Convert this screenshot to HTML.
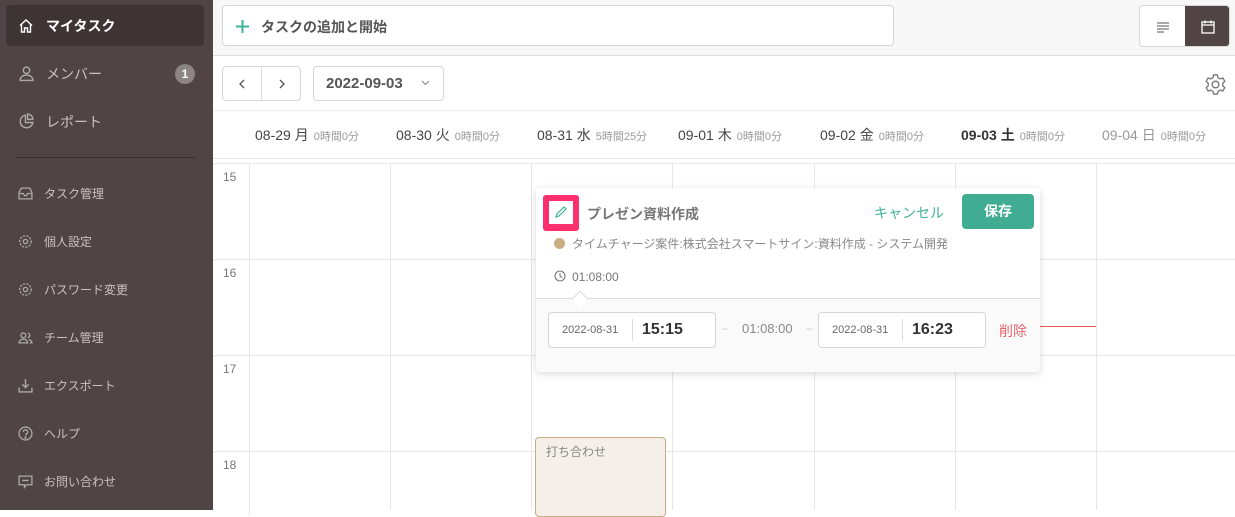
<!DOCTYPE html>
<html><head><meta charset="utf-8"><style>
*{box-sizing:border-box;margin:0;padding:0}
body{width:1235px;height:510px;overflow:hidden;position:relative;background:#fff;font-family:"Liberation Sans","Noto Sans CJK JP",sans-serif;color:#333}
.abs{position:absolute}
#side{left:0;top:0;width:213px;height:510px;background:#514446}
.nav{position:absolute;left:6px;width:198px;height:41px;display:flex;align-items:center;color:#c9c1c1;font-size:14px}
.nav svg{position:absolute;left:12px}
.nav span{position:absolute;left:40px}
.sm{font-size:12px}
.sm span{left:38px}
#top{left:213px;top:0;width:1022px;height:56px;background:#f7f7f7;border-bottom:1px solid #ddd}
.btn{position:absolute;border:1px solid #d6d6d6;border-radius:4px;background:#fff}
.col{position:absolute;top:158px;width:1px;height:352px;background:#e6e6e6}
.row{position:absolute;left:213px;width:1022px;height:1px;background:#e6e6e6}
.hr{position:absolute;left:223px;font-size:12px;color:#777}
.day{position:absolute;top:125px;font-size:14px;color:#444;white-space:nowrap}
.day small{font-size:11px;color:#999;margin-left:5px}
</style></head><body>
<div id="side" class="abs">
 <div class="nav" style="top:5px;background:#3e3434;border-radius:4px;color:#fff;font-weight:bold"><svg width="16" height="16" viewBox="0 0 16 16" fill="none" stroke="#fff" stroke-width="1.4"><path d="M2 7.5L8 2l6 5.5M3.5 6.5V14h3v-4h3v4h3V6.5"/></svg><span>マイタスク</span></div>
 <div class="nav" style="top:53px"><svg width="17" height="17" viewBox="0 0 16 16" fill="none" stroke="#aaa" stroke-width="1.3"><circle cx="8" cy="5" r="3"/><path d="M2 14.5c0-3 2.5-5 6-5s6 2 6 5z"/></svg><span>メンバー</span><div class="abs" style="left:169px;top:11px;width:20px;height:20px;border-radius:10px;background:#8d8585;color:#fff;font-size:12px;font-weight:bold;text-align:center;line-height:20px">1</div></div>
 <div class="nav" style="top:101px"><svg width="17" height="17" viewBox="0 0 16 16" fill="none" stroke="#aaa" stroke-width="1.3"><path d="M7 2a6 6 0 1 0 7 7H7z M9 1v5h5a5 5 0 0 0-5-5z"/></svg><span>レポート</span></div>
 <div class="abs" style="left:15px;top:157px;width:180px;height:1px;background:#3a3031"></div>
 <div class="nav sm" style="top:173px"><svg width="15" height="15" viewBox="0 0 14 14" fill="none" stroke="#aaa" stroke-width="1.2"><path d="M1 6l2-4h8l2 4v6H1zM1 7h4l1 2h2l1-2h4"/></svg><span>タスク管理</span></div>
 <div class="nav sm" style="top:221px"><svg width="15" height="15" viewBox="0 0 14 14" fill="none" stroke="#aaa" stroke-width="1.2"><circle cx="7" cy="7" r="2"/><circle cx="7" cy="7" r="5.3" stroke-dasharray="2 1.2"/></svg><span>個人設定</span></div>
 <div class="nav sm" style="top:269px"><svg width="15" height="15" viewBox="0 0 14 14" fill="none" stroke="#aaa" stroke-width="1.2"><circle cx="7" cy="7" r="2"/><circle cx="7" cy="7" r="5.3" stroke-dasharray="2 1.2"/></svg><span>パスワード変更</span></div>
 <div class="nav sm" style="top:317px"><svg width="15" height="15" viewBox="0 0 14 14" fill="none" stroke="#aaa" stroke-width="1.2"><circle cx="5" cy="5" r="2.3"/><path d="M1 12c0-2 2-3.5 4-3.5s4 1.5 4 3.5zM9 3a2 2 0 0 1 0 4M10 9c2 .5 3 1.5 3 3h-2"/></svg><span>チーム管理</span></div>
 <div class="nav sm" style="top:365px"><svg width="15" height="15" viewBox="0 0 14 14" fill="none" stroke="#aaa" stroke-width="1.3"><path d="M7 1v8M4 6l3 3 3-3M1 9v4h12V9"/></svg><span>エクスポート</span></div>
 <div class="nav sm" style="top:413px"><svg width="15" height="15" viewBox="0 0 14 14" fill="none" stroke="#aaa" stroke-width="1.2"><circle cx="7" cy="7" r="6"/><path d="M5 5.5a2 2 0 1 1 2.5 2V9"/><circle cx="7" cy="10.8" r=".5" fill="#aaa"/></svg><span>ヘルプ</span></div>
 <div class="nav sm" style="top:461px"><svg width="15" height="15" viewBox="0 0 14 14" fill="none" stroke="#aaa" stroke-width="1.2"><path d="M1 2h12v8H8l-2 2.5V10H1zM4 6h6"/></svg><span>お問い合わせ</span></div>
</div>
<div id="top" class="abs"></div>
<div class="btn" style="left:222px;top:5px;width:672px;height:41px"><svg class="abs" style="left:13px;top:14px" width="13" height="13" viewBox="0 0 13 13" stroke="#3fb39a" stroke-width="2"><path d="M6.5 0v13M0 6.5h13"/></svg><span class="abs" style="left:38px;top:11px;font-size:14px;font-weight:bold;color:#555">タスクの追加と開始</span></div>
<div class="btn" style="left:1139px;top:5px;width:91px;height:42px;overflow:hidden"><div class="abs" style="left:45px;top:0;width:46px;height:42px;background:#514446"></div>
<svg class="abs" style="left:16px;top:14px" width="14" height="14" viewBox="0 0 14 14" stroke="#777" stroke-width="1.2"><path d="M1 3h12M1 6h12M1 9h12M1 12h7"/></svg>
<svg class="abs" style="left:60px;top:13px" width="16" height="16" viewBox="0 0 16 16" fill="none" stroke="#fff" stroke-width="1.3"><rect x="2" y="3" width="12" height="11"/><path d="M2 6h12M5 1.5v3M11 1.5v3"/></svg></div>
<div class="btn" style="left:222px;top:66px;width:79px;height:35px"><div class="abs" style="left:38px;top:0;width:1px;height:33px;background:#ddd"></div>
<svg class="abs" style="left:15px;top:12px" width="8" height="10" viewBox="0 0 8 10" fill="none" stroke="#555" stroke-width="1.3"><path d="M6 1L2 5l4 4"/></svg>
<svg class="abs" style="left:55px;top:12px" width="8" height="10" viewBox="0 0 8 10" fill="none" stroke="#555" stroke-width="1.3"><path d="M2 1l4 4-4 4"/></svg></div>
<div class="btn" style="left:313px;top:66px;width:131px;height:35px"><span class="abs" style="left:12px;top:8px;font-size:15px;font-weight:bold;color:#555">2022-09-03</span><svg class="abs" style="left:107px;top:13px" width="9" height="6" viewBox="0 0 9 6" fill="none" stroke="#888" stroke-width="1.1"><path d="M1 1l3.5 3.5L8 1"/></svg></div>
<svg class="abs" style="left:1204px;top:73px" width="23" height="23" viewBox="0 0 24 24" fill="none" stroke="#777" stroke-width="1.4"><circle cx="12" cy="12" r="3.5"/><path d="M10 2h4l.6 2.8 2.4 1.4 2.7-.9 2 3.4-2.1 1.9v2.8l2.1 1.9-2 3.4-2.7-.9-2.4 1.4L14 22h-4l-.6-2.8-2.4-1.4-2.7.9-2-3.4 2.1-1.9v-2.8L2.3 8.7l2-3.4 2.7.9 2.4-1.4z"/></svg>
<div class="row" style="top:110px;background:#eee"></div>
<div class="row" style="top:158px"></div>
<div class="row" style="top:163px"></div>
<div class="row" style="top:259px"></div>
<div class="row" style="top:355px"></div>
<div class="row" style="top:451px"></div>
<div class="col" style="left:249px;top:163px"></div><div class="col" style="left:390px"></div><div class="col" style="left:531px"></div><div class="col" style="left:672px"></div><div class="col" style="left:814px"></div><div class="col" style="left:955px"></div><div class="col" style="left:1096px"></div>
<div class="abs" style="left:213px;top:159px;width:1022px;height:4px;background:#fff"></div>
<div class="hr" style="top:170px">15</div><div class="hr" style="top:266px">16</div><div class="hr" style="top:362px">17</div><div class="hr" style="top:458px">18</div>
<div class="day" style="left:255px">08-29 月<small>0時間0分</small></div>
<div class="day" style="left:396px">08-30 火<small>0時間0分</small></div>
<div class="day" style="left:537px">08-31 水<small>5時間25分</small></div>
<div class="day" style="left:678px">09-01 木<small>0時間0分</small></div>
<div class="day" style="left:820px">09-02 金<small>0時間0分</small></div>
<div class="day" style="left:961px;font-weight:bold;color:#333">09-03 土<small style="font-weight:normal">0時間0分</small></div>
<div class="day" style="left:1102px;color:#999">09-04 日<small>0時間0分</small></div>
<div class="abs" style="left:1040px;top:326px;width:56px;height:1px;background:#e55"></div>
<div class="abs" style="left:535px;top:437px;width:131px;height:80px;background:#f4efe8;border:1px solid #c9ac82;border-radius:4px"><span class="abs" style="left:10px;top:5px;font-size:12px;color:#888">打ち合わせ</span></div>
<div class="abs" style="left:536px;top:188px;width:504px;height:184px;background:#fafafa;border-radius:4px;box-shadow:0 2px 8px rgba(0,0,0,.15);overflow:hidden">
 <div class="abs" style="left:0;top:0;width:504px;height:111px;background:#fff;border-bottom:1px solid #ddd"></div>
 <div class="abs" style="left:38px;top:105px;width:12px;height:12px;background:#fff;border-left:1px solid #ddd;border-top:1px solid #ddd;transform:rotate(45deg)"></div>
 <div class="abs" style="left:7px;top:7px;width:36px;height:36px;background:#fe2f6f;border-radius:3px"><div class="abs" style="left:6px;top:6px;width:24px;height:23px;background:#fff"></div>
 <svg class="abs" style="left:11px;top:10px" width="14" height="14" viewBox="0 0 14 14" fill="none" stroke="#3fb39a" stroke-width="1.2"><path d="M2 12l1-3 7-7 2 2-7 7z"/></svg></div>
 <span class="abs" style="left:51px;top:16px;font-size:14px;font-weight:bold;color:#777">プレゼン資料作成</span>
 <span class="abs" style="left:338px;top:15px;font-size:14px;color:#3fb39a">キャンセル</span>
 <div class="abs" style="left:426px;top:6px;width:72px;height:35px;background:#40ad92;border-radius:4px;color:#fff;font-weight:bold;font-size:14px;text-align:center;line-height:35px">保存</div>
 <div class="abs" style="left:18px;top:50px;width:11px;height:11px;border-radius:6px;background:#c9ae84"></div>
 <span class="abs" style="left:36px;top:47px;font-size:12px;color:#888">タイムチャージ案件:株式会社スマートサイン:資料作成 - システム開発</span>
 <svg class="abs" style="left:18px;top:82px" width="12" height="12" viewBox="0 0 12 12" fill="none" stroke="#777" stroke-width="1.1"><circle cx="6" cy="6" r="5"/><path d="M6 3v3l2 1.5"/></svg>
 <span class="abs" style="left:36px;top:82px;font-size:12px;color:#777">01:08:00</span>
 <div class="btn" style="left:12px;top:124px;width:168px;height:36px"><span class="abs" style="left:13px;top:11px;font-size:11px;color:#666">2022-08-31</span><div class="abs" style="left:83px;top:6px;width:1px;height:22px;background:#ddd"></div><span class="abs" style="left:93px;top:8px;font-size:16px;font-weight:bold;color:#333">15:15</span></div>
 <span class="abs" style="left:186px;top:133px;font-size:12px;color:#ccc">–</span>
 <span class="abs" style="left:206px;top:133px;font-size:13px;color:#888">01:08:00</span>
 <span class="abs" style="left:270px;top:133px;font-size:12px;color:#ccc">–</span>
 <div class="btn" style="left:282px;top:124px;width:168px;height:36px"><span class="abs" style="left:13px;top:11px;font-size:11px;color:#666">2022-08-31</span><div class="abs" style="left:83px;top:6px;width:1px;height:22px;background:#ddd"></div><span class="abs" style="left:93px;top:8px;font-size:16px;font-weight:bold;color:#333">16:23</span></div>
 <span class="abs" style="left:463px;top:133px;font-size:14px;color:#e5646a">削除</span>
</div>
</body></html>
